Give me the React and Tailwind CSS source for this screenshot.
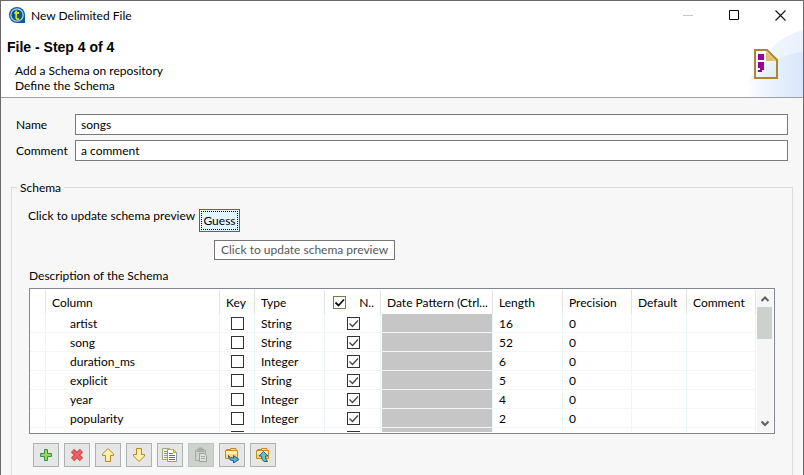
import React, { useState } from "react";

const FIELDS = [
  { name: "artist", type: "String", length: "16", precision: "0" },
  { name: "song", type: "String", length: "52", precision: "0" },
  { name: "duration_ms", type: "Integer", length: "6", precision: "0" },
  { name: "explicit", type: "String", length: "5", precision: "0" },
  { name: "year", type: "Integer", length: "4", precision: "0" },
  { name: "popularity", type: "Integer", length: "2", precision: "0" },
  { name: "", type: "", length: "", precision: "" },
];

function AppLogo() {
  return (
    <svg className="size-4 shrink-0" viewBox="0 0 16 16" aria-hidden="true">
      <path d="M8 0a8 8 0 1 0 0 16h8V8a8 8 0 0 0-8-8z" fill="#0d5c9e" />
      <circle cx="8" cy="8" r="6.2" fill="#0a5596" stroke="#b9d6ea" strokeWidth="1.2" />
      <path d="M7.2 3.6v7q0 1.6 1.6 1.6h1.4M5.4 6h4.6" fill="none" stroke="#d6dc2c" strokeWidth="1.8" />
    </svg>
  );
}

function WindowButton({ label, children }) {
  return (
    <button type="button" aria-label={label} className="grid h-7 w-[46px] place-items-center">
      <svg className="h-[11px] w-[11px]" viewBox="0 0 11 11" fill="none">
        {children}
      </svg>
    </button>
  );
}

function TitleBar() {
  return (
    <div className="flex h-7 items-center pl-2">
      <AppLogo />
      <span className="ml-[6px] flex-1">New Delimited File</span>
      <WindowButton label="Minimize">
        <path d="M0 5.5h10" stroke="#c8c8c8" />
      </WindowButton>
      <WindowButton label="Maximize">
        <path d="M.5.5h9v9h-9z" stroke="#000" />
      </WindowButton>
      <WindowButton label="Close">
        <path d="M.5.5l10 10M10.5.5l-10 10" stroke="#111" strokeWidth="1.1" />
      </WindowButton>
    </div>
  );
}

function BannerArt() {
  return (
    <svg className="absolute right-0 bottom-0 h-[68px] w-[54px]" viewBox="0 0 54 68" aria-hidden="true">
      <defs>
        <linearGradient id="outer" x1="0" x2="1">
          <stop offset="0" stopColor="#f6faff" />
          <stop offset="1" stopColor="#e9f1fd" />
        </linearGradient>
        <linearGradient id="inner" x1="0" x2="1">
          <stop offset="0" stopColor="#fbfdff" />
          <stop offset="0.5" stopColor="#e6f0fd" />
          <stop offset="1" stopColor="#d9e7fb" />
        </linearGradient>
        <linearGradient id="page" x1="0" x2="1" y1="0" y2="1">
          <stop offset="0" stopColor="#fff" />
          <stop offset="1" stopColor="#dde9fa" />
        </linearGradient>
      </defs>
      <path d="M0 68V50Q20 10 54 1V68z" fill="url(#outer)" />
      <path d="M0 68V56Q20 26 54 23V68z" fill="url(#inner)" />
      <path d="M6 21h12l10 10v18H6z" fill="url(#page)" stroke="#ad8533" strokeWidth="2" />
      <path d="M17 22l10 10H17z" fill="#e3bd78" />
      <path d="M9 25h6v6H9zM9 33h6v8h-2v2H9v-2h2v-2H9z" fill="#990099" shapeRendering="crispEdges" />
    </svg>
  );
}

function TickBox({ label, initial = false, header = false }) {
  const [on, setOn] = useState(initial);
  return (
    <label className="grid size-[13px] place-items-center">
      <input
        type="checkbox"
        aria-label={label}
        checked={on}
        onChange={(e) => setOn(e.target.checked)}
        className={
          header
            ? "col-start-1 row-start-1 size-[13px] appearance-none border border-[#737d4c] bg-white"
            : "col-start-1 row-start-1 size-[13px] appearance-none border border-[#333] bg-white"
        }
      />
      {on && (
        <svg className="pointer-events-none col-start-1 row-start-1 size-[13px]" viewBox="0 0 13 13" fill="none">
          <path d="M2.5 6.5l3 3 5.5-6" stroke={header ? "#111" : "#444"} strokeWidth={header ? 1.8 : 1.3} />
        </svg>
      )}
    </label>
  );
}

function TextRow({ id, label, value }) {
  return (
    <div className="flex items-center">
      <label htmlFor={id} className="w-[59px] shrink-0">{label}</label>
      <input
        id={id}
        defaultValue={value}
        className="h-[21px] min-w-0 flex-1 border border-[#7a7a7a] bg-white px-[5px] outline-none"
      />
    </div>
  );
}

function Head({ children }) {
  return (
    <th scope="col" className="h-6 truncate border-r border-[#e3e3e3] pl-[6px] text-left font-normal">
      {children}
    </th>
  );
}

function Cell({ children, className = "pl-[6px]" }) {
  return (
    <td className={"h-[19px] border-r border-b border-r-[#ecf6f9] border-b-[#f3f5f6] py-0 pr-0 " + className}>
      {children}
    </td>
  );
}

function ScrollBar() {
  return (
    <div className="my-px mr-px flex w-4 shrink-0 flex-col bg-[#f6f6f6]" aria-hidden="true">
      <svg className="h-[17px] w-4" viewBox="0 0 16 17" fill="none">
        <path d="M4.5 11l3.5-3.5 3.5 3.5" stroke="#606060" strokeWidth="2" />
      </svg>
      <div className="h-8 w-[15px] bg-[#cdd1cd]" />
      <div className="flex-1" />
      <svg className="h-[17px] w-4" viewBox="0 0 16 17" fill="none">
        <path d="M4.5 6.5l3.5 3.5 3.5-3.5" stroke="#606060" strokeWidth="2" />
      </svg>
    </div>
  );
}

function SchemaTable() {
  return (
    <div className="flex h-[146px] overflow-hidden border border-[#828790] bg-white">
      <div className="mb-px min-w-0 flex-1 overflow-hidden pt-px">
        <table aria-labelledby="schema-title" className="w-full table-fixed border-separate border-spacing-0">
          <colgroup>
            <col className="w-4" />
            <col />
            <col className="w-[35px]" />
            <col className="w-[70px]" />
            <col className="w-[56px]" />
            <col className="w-[112px]" />
            <col className="w-[70px]" />
            <col className="w-[69px]" />
            <col className="w-[55px]" />
            <col className="w-[69px]" />
          </colgroup>
          <thead>
            <tr>
              <Head />
              <Head>Column</Head>
              <Head>Key</Head>
              <Head>Type</Head>
              <Head>
                <span className="flex items-center justify-between pr-[6px] pl-[2px]">
                  <TickBox header initial label="Nullable for all columns" />
                  N..
                </span>
              </Head>
              <Head>Date Pattern (Ctrl...</Head>
              <Head>Length</Head>
              <Head>Precision</Head>
              <Head>Default</Head>
              <Head>Comment</Head>
            </tr>
          </thead>
          <tbody>
            {FIELDS.map((f, i) => (
              <tr key={i}>
                <Cell />
                <Cell className="pl-6">{f.name}</Cell>
                <Cell>
                  <div className="pl-[5px]"><TickBox label={f.name + " key"} /></div>
                </Cell>
                <Cell>{f.type}</Cell>
                <Cell>
                  <div className="pl-4"><TickBox initial label={f.name + " nullable"} /></div>
                </Cell>
                <Cell className="border-l border-l-white bg-[#c6c6c6]" />
                <Cell>{f.length}</Cell>
                <Cell>{f.precision}</Cell>
                <Cell />
                <Cell />
              </tr>
            ))}
          </tbody>
        </table>
      </div>
      <div className="w-px shrink-0" />
      <ScrollBar />
    </div>
  );
}

function Folder() {
  return (
    <>
      <path d="M2.5 4V2.500h3.500v1.500M6.500 3.500v-2h5.500v2" fill="#fbe7a2" stroke="#c98a25" />
      <path d="M1.500 3.500h12v8h-12z" fill="#fbd67c" stroke="#c98a25" />
      <path d="M2 4h11v3H2z" fill="#fdeeb8" />
    </>
  );
}

const TOOLS = [
  {
    label: "Add",
    art: <path d="M6.500 2.500h3v4h4v3h-4v4h-3v-4h-4v-3h4z" fill="#a4d64c" stroke="#2f9152" />,
  },
  {
    label: "Remove",
    art: (
      <>
        <path d="M3.500 3.500l9 9M12.500 3.500l-9 9" stroke="#cf4b4b" strokeWidth="4.600" />
        <path d="M4 4l8 8M12 4l-8 8" stroke="#f0606a" strokeWidth="2.400" />
      </>
    ),
  },
  {
    label: "Move up",
    art: <path d="M8 1.500l5.500 5.500v1.500h-3v6h-5v-6h-3V7z" fill="#fff2ad" stroke="#b9851c" />,
  },
  {
    label: "Move down",
    art: <path d="M8 14.500L2.500 9V7.500h3v-6h5v6h3V9z" fill="#fff2ad" stroke="#b9851c" />,
  },
  {
    label: "Copy",
    art: (
      <>
        <path d="M.5 1.500h7l2 2v9H.5z" fill="#eef3fb" stroke="#a9a276" />
        <path d="M2 4.500h3M2 6.500h3M2 8.500h3M2 10.500h3" stroke="#7f9cc8" />
        <path d="M5.500 2.500h6l3 3v9h-9z" fill="#fff" stroke="#8898ae" />
        <path d="M5.500 2.500h6l3 3" stroke="#c3a64c" />
        <path d="M11.500 2.500v3h3z" fill="#ecd27c" stroke="#c3a64c" />
        <path d="M7 6.500h4M7 8.500h6M7 10.500h6M7 12.500h6" stroke="#4b76bb" />
      </>
    ),
  },
  {
    label: "Paste",
    disabled: true,
    art: (
      <>
        <path d="M2.500 3.500h10v10h-10z" stroke="#a6aaa6" />
        <path d="M4 2.500h7v2H4zM6 1h3v2H6z" fill="#bfc3bf" stroke="#a2a6a2" />
        <path d="M6.500 6.500h5l2 2v6h-7z" fill="#dce0dc" stroke="#9fa39f" />
        <path d="M8 9.500h4M8 11.500h4" stroke="#a6aaa6" />
      </>
    ),
  },
  {
    label: "Export",
    art: (
      <>
        <Folder />
        <path d="M4.500 8.500q1 3 5 2.500V8.500l5.500 4-5.500 3.500v-2.500q-5 .5-5-5z" fill="#62aecb" stroke="#20608f" />
      </>
    ),
  },
  {
    label: "Import",
    art: (
      <>
        <Folder />
        <path d="M8.500 4.500l4.500 4.500h-2.500q-.5 3 2 5.500-6 1-6-5.500H4z" fill="#75bcc5" stroke="#20608f" />
      </>
    ),
  },
];

function ToolBar() {
  return (
    <div className="mt-[9px] ml-1 flex gap-[5px]">
      {TOOLS.map((t) => (
        <button
          key={t.label}
          type="button"
          aria-label={t.label}
          disabled={t.disabled}
          className="grid h-6 w-[26px] place-items-center border border-[#adb2b2] bg-[#e6e6e6] disabled:border-[#bfc5bf] disabled:bg-[#cdd2cd]"
        >
          <svg className="size-4" viewBox="0 0 16 16" fill="none">{t.art}</svg>
        </button>
      ))}
    </div>
  );
}

export default function App() {
  return (
    <div className="min-h-screen overflow-hidden border-x border-t border-[#696969] bg-[#f7f7f7] font-[Lato,'Open_Sans',sans-serif] text-[12px] leading-[15px] text-black">
      <header className="relative h-[97px] border-b border-[#a0a0a0] bg-white">
        <BannerArt />
        <TitleBar />
        <h1 className="mt-[9px] pl-[6px] font-['Liberation_Sans',Arial,sans-serif] text-[14px] leading-[18px] font-bold">
          File - Step 4 of 4
        </h1>
        <p className="mt-[7px] pl-[14px]">
          Add a Schema on repository
          <br />
          Define the Schema
        </p>
      </header>

      <main className="px-[10px] pt-4">
        <div className="flex flex-col gap-[5px] px-[5px]">
          <TextRow id="name" label="Name" value="songs" />
          <TextRow id="comment" label="Comment" value="a comment" />
        </div>

        <fieldset className="mt-[19px] h-[300px] min-w-0 border border-[#dcdcdc] px-[17px]">
          <legend className="-ml-3 px-[3px]">Schema</legend>
          <div className="relative -ml-px mt-[14px] flex items-start">
            <span className="w-[171px] shrink-0 leading-[13px] whitespace-nowrap">Click to update schema preview</span>
            <button
              type="button"
              className="h-[23px] w-[41px] border border-[#0078d7] bg-[#e5f5ff] p-px"
            >
              <span className="grid h-full place-items-center border border-dotted border-black">Guess</span>
            </button>
            <div
              role="tooltip"
              className="absolute top-[31px] left-[186px] z-10 h-5 border border-[#767676] bg-white px-[6px] leading-[18px] whitespace-nowrap text-[#575757]"
            >
              Click to update schema preview
            </div>
          </div>
          <h2 id="schema-title" className="mt-9 mb-[5px]">Description of the Schema</h2>
          <SchemaTable />
          <ToolBar />
        </fieldset>
      </main>
    </div>
  );
}
